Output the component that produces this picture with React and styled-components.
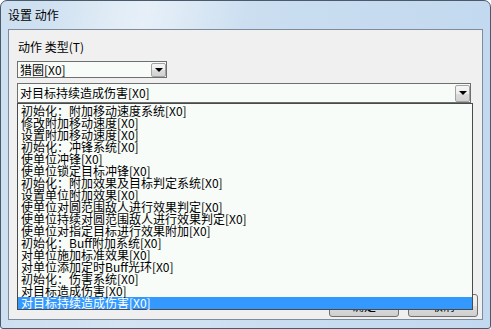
import React from 'react';
import styled, { createGlobalStyle } from 'styled-components';

const GlobalStyle = createGlobalStyle`
  html, body {
    margin: 0;
    padding: 0;
    background: #ffffff;
  }
  body {
    font-family: "Noto Sans CJK SC", "Liberation Sans", sans-serif;
    font-size: 12px;
    color: #000;
  }
  * {
    box-sizing: border-box;
  }
`;

const Window = styled.div`
  width: 491px;
  height: 329px;
  border: 1px solid #4b5a6b;
  border-radius: 7px 7px 3px 3px;
  background: linear-gradient(to right, #cddff0 0%, #d4e4f3 25%, #c9ddf0 60%, #c3d9ef 100%);
  display: flex;
  flex-direction: column;
  overflow: hidden;
`;

const TitleBar = styled.div`
  height: 28px;
  padding-left: 7px;
  display: flex;
  align-items: center;
  font-size: 12px;
  line-height: 14px;
  background: linear-gradient(105deg, rgba(255,255,255,0) 10%, rgba(255,255,255,0.45) 30%, rgba(255,255,255,0) 50%);
`;

const Client = styled.div`
  flex: 1;
  margin: 0 7px 8px 7px;
  border: 1px solid #7d8b9b;
  background: #f0f0f0;
  display: flex;
  flex-direction: column;
  padding: 10px 4px 2px 8px;
`;

const Label = styled.div`
  line-height: 14px;
  padding-left: 1px;
  margin-bottom: 7px;
`;

const Combo = styled.div`
  position: relative;
  width: ${p => p.$width}px;
  height: ${p => p.$height}px;
  margin-bottom: ${p => p.$gap || 0}px;
  border: 1px solid #6f6f6f;
  background: #f8fcf8;
  display: flex;
  align-items: center;
  padding-left: 2px;
`;

const ComboText = styled.div`
  flex: 1;
  line-height: 14px;
  white-space: nowrap;
`;

const DropButton = styled.div`
  width: 15px;
  height: calc(100% - 1px);
  border: 1px solid #a3a3a3;
  border-radius: 2px;
  background: linear-gradient(to bottom, #f6f6f6 0%, #ececec 50%, #dcdcdc 51%, #d2d2d2 100%);
  display: flex;
  align-items: center;
  justify-content: center;
`;

const Arrow = styled.span`
  width: 0;
  height: 0;
  border-left: 4px solid transparent;
  border-right: 4px solid transparent;
  border-top: 4px solid #000;
`;

const List = styled.div`
  position: absolute;
  top: calc(100% + 1px);
  left: -1px;
  width: 456px;
  padding-top: 1px;
  border: 1px solid #4a4a4a;
  background: #f8fcf8;
  z-index: 10;
`;

const Item = styled.div`
  height: 12px;
  line-height: 12px;
  padding-left: 3px;
  white-space: nowrap;
  background: ${p => (p.$selected ? '#3399ff' : 'transparent')};
  color: ${p => (p.$selected ? '#ffffff' : '#000000')};
`;

const ButtonRow = styled.div`
  margin-top: auto;
  display: flex;
  justify-content: flex-end;
  gap: 9px;
`;

const Button = styled.div`
  width: 70px;
  height: 23px;
  border: 1px solid #707070;
  border-radius: 3px;
  background: linear-gradient(to bottom, #f2f2f2 0%, #ebebeb 50%, #dddddd 51%, #cfcfcf 100%);
  display: flex;
  align-items: center;
  justify-content: center;
  line-height: 14px;
`;

const items = [
  '初始化：附加移动速度系统[X0]',
  '修改附加移动速度[X0]',
  '设置附加移动速度[X0]',
  '初始化：冲锋系统[X0]',
  '使单位冲锋[X0]',
  '使单位锁定目标冲锋[X0]',
  '初始化：附加效果及目标判定系统[X0]',
  '设置单位附加效果[X0]',
  '使单位对圆范围敌人进行效果判定[X0]',
  '使单位持续对圆范围敌人进行效果判定[X0]',
  '使单位对指定目标进行效果附加[X0]',
  '初始化：Buff附加系统[X0]',
  '对单位施加标准效果[X0]',
  '对单位添加定时Buff光环[X0]',
  '初始化：伤害系统[X0]',
  '对目标造成伤害[X0]',
  '对目标持续造成伤害[X0]',
];

const App = () => {
  const selected = items.length - 1;
  return (
    <>
      <GlobalStyle />
      <Window>
        <TitleBar>设置 动作</TitleBar>
        <Client>
          <Label>动作 类型(T)</Label>
          <Combo $width={150} $height={17} $gap={5}>
            <ComboText>猎圈[X0]</ComboText>
            <DropButton><Arrow /></DropButton>
          </Combo>
          <Combo $width={454} $height={20}>
            <ComboText>对目标持续造成伤害[X0]</ComboText>
            <DropButton><Arrow /></DropButton>
            <List>
              {items.map((text, index) => (
                <Item key={index} $selected={index === selected}>{text}</Item>
              ))}
            </List>
          </Combo>
          <ButtonRow>
            <Button>确定</Button>
            <Button>取消</Button>
          </ButtonRow>
        </Client>
      </Window>
    </>
  );
};

export default App;
